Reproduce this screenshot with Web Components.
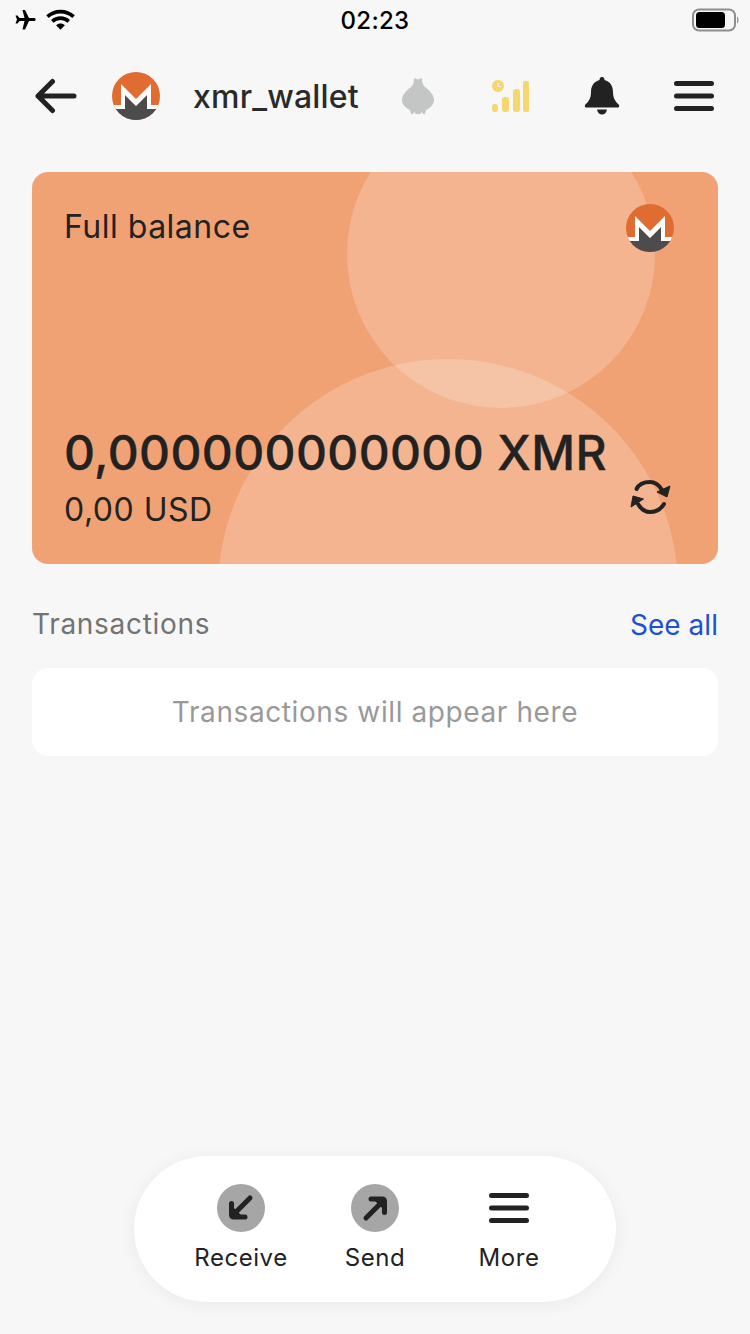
<!DOCTYPE html>
<html lang="en"><head><meta charset="utf-8"><title>xmr_wallet</title>
<style>html,body{margin:0;padding:0;background:#f7f7f7}body{width:750px;height:1334px;overflow:hidden;font-family:Inter,"Liberation Sans",sans-serif;color:#222}</style>
</head><body>
<wallet-app></wallet-app>
<template id="logo"><style>:host{display:block;width:48px;height:48px;flex:none}svg{display:block;width:100%;height:100%}</style>
<svg viewBox="0 0 48 48"><defs><clipPath id="c"><circle cx="24" cy="24" r="24"/></clipPath></defs><g clip-path="url(#c)"><rect width="48" height="48" fill="#e06c32"/><path d="M0 37H13V23L24 34L35 23V37H48V48H0Z" fill="#4c4c4c"/><path d="M0 37V33H9V12L24 27L39 12V33H48V37H35V23L24 34L13 23V37Z" fill="#fff"/></g></svg></template>
<script>
const tpl=(html)=>{const t=document.createElement('template');t.innerHTML=html;return t};
function def(name,html){const t=tpl(html);customElements.define(name,class extends HTMLElement{constructor(){super();this.attachShadow({mode:'open'}).appendChild(t.content.cloneNode(true))}})}
def('xmr-logo',document.getElementById('logo').innerHTML);
const burger='<svg width="40" height="30" viewBox="0 0 40 30"><g stroke="#222" stroke-width="5" stroke-linecap="round"><path d="M2.500 2.500H37.500M2.500 15H37.500M2.500 27.500H37.500"/></g></svg>';
def('status-bar',`<style>:host{display:flex;height:40px;align-items:center;justify-content:space-between;padding:0 11px 0 14px;position:relative;color:#000}
.l{display:flex;gap:10px;align-items:center}.t{position:absolute;left:0;right:0;top:1px;text-align:center;font:500 24px/40px Inter,sans-serif;letter-spacing:.3px}svg{display:block}</style>
<div class="l"><svg width="22" height="20" viewBox="0 0 22 20"><path d="M8.500 0H11L15 8H20.500C22 8 22 11 20.500 11H15L11 19.500H8.500L10.500 11H5.500L3.500 13.500H1.500L3 9.500L1.500 5.500H3.500L5.500 8H10.500Z"/></svg>
<svg width="29" height="22" viewBox="0 0 30 22"><path d="M1.500 7.500C9 .5 21 .5 28.500 7.500" fill="none" stroke="#000" stroke-width="3.800"/><path d="M6.500 12.500C11.500 8 18.500 8 23.500 12.500" fill="none" stroke="#000" stroke-width="3.800"/><path d="M10.500 16.500C13 14 17 14 19.500 16.500L15 21Z"/></svg></div>
<div class="t">02:23</div>
<svg width="47" height="24" viewBox="0 0 47 24"><rect x="1" y="1.500" width="42" height="21" rx="6" fill="none" stroke="#8e8e8e" stroke-width="2"/><rect x="4" y="4" width="29" height="16" rx="3.500"/><path d="M45 8.500C47 9 47 15 45 15.500Z" fill="#9a9a9a"/></svg>`);
def('top-bar',`<style>:host{display:flex;align-items:center;height:96px;padding:8px 36px 8px 35px;box-sizing:border-box;margin-top:8px}
h1{margin:2px 0 0 33px;font:500 32px/48px Inter,sans-serif;color:#2a2a2a;width:208px;white-space:nowrap;letter-spacing:.2px}
svg{display:block;flex:none}.back{margin-right:35px}</style>
<svg class="back" width="42" height="36" viewBox="0 0 42 36"><path d="M39 18H3M17.500 3.500L3 18L17.500 32.500" fill="none" stroke="#222" stroke-width="5" stroke-linecap="round" stroke-linejoin="round"/></svg>
<xmr-logo></xmr-logo><h1>xmr_wallet</h1>
<svg style="margin-right:57px;margin-left:1px;margin-top:-1px" width="34" height="38" viewBox="0 0 34 38"><path d="M13 1L17 2.500L21 1C21 6 22 8 24 10C29 14 33 18 33 23C33 28 29 31 25 33L24 37H22L20.500 34.500L19.500 37H14.500L13.500 34.500L12 37H10L9 33C5 31 1 28 1 23C1 18 5 14 10 10C12 8 13 6 13 1Z" fill="#c4c5c5"/></svg>
<svg style="margin-right:54px;margin-top:-1px" width="38" height="32" viewBox="0 0 38 32"><g fill="#f5d76e"><circle cx="6" cy="6" r="6"/><rect x="0" y="24" width="6" height="8" rx="3"/><rect x="10" y="17" width="7" height="15" rx="3"/><rect x="21" y="9" width="7" height="23" rx="3"/><rect x="31" y="1" width="6" height="31" rx="2"/></g><path d="M6 3V6.500H9" stroke="#f7f7f7" stroke-width="1.200" fill="none"/></svg>
<svg style="margin-right:54px;margin-top:-1px" width="36" height="38" viewBox="0 0 36 38"><path d="M18 0C20 0 20.500 1.500 20.500 3C26 4.500 29 9 29 15C29 21 31 24 35 28C35.500 29.500 35 30.500 34 30.500H2C1 30.500 .5 29.500 1 28C5 24 7 21 7 15C7 9 10 4.500 15.500 3C15.500 1.500 16 0 18 0ZM13 32.500H23C22.500 35.500 20.500 37.500 18 37.500C15.500 37.500 13.500 35.500 13 32.500Z" fill="#222"/></svg>
<span style="display:block;flex:none;height:30px">${burger}</span>`);
def('balance-card',`<style>:host{display:flex;flex-direction:column;position:relative;overflow:hidden;height:392px;margin:0 32px;box-sizing:border-box;padding:32px 33px;background:#f1a274;border-radius:16px;color:#222}
.c{position:absolute;border-radius:50%;background:rgba(255,255,255,.2)}.a{left:315px;top:-72px;width:308px;height:308px}.b{left:186px;top:187px;width:460px;height:460px}
.top,.bot{position:relative;display:flex;justify-content:space-between;align-items:flex-start}.top{margin-right:11px}
.f{font:400 32px/46px Inter,sans-serif;letter-spacing:.5px;margin-left:-1px}.bot{margin-top:auto;display:block}.v{font:500 48px/56px Inter,sans-serif;letter-spacing:.38px;-webkit-text-stroke:.4px #222;white-space:nowrap;margin:0 0 7px -1px}.u{font:400 32px/44px Inter,sans-serif;letter-spacing:.5px;margin-left:-1px}
.r{position:absolute;right:14px;bottom:18px;display:block}</style>
<div class="c a"></div><div class="c b"></div>
<div class="top"><div class="f">Full balance</div><xmr-logo></xmr-logo></div>
<div class="bot"><div class="v">0,000000000000 XMR</div><div class="u">0,00 USD</div>
<svg class="r" width="41" height="34" viewBox="0 0 41 34"><g fill="none" stroke="#222" stroke-width="4" stroke-linecap="round"><path d="M6.500 9C9 4 14 2 20 2C25 2 29 5 32 10"/><path d="M34 24C31 29 26 32 20 32C15 32 11 29 8 24"/></g><path d="M40 6L37 17L27 12Z" fill="#222" stroke="#222" stroke-linejoin="round"/><path d="M1 27L3 16L13.500 19Z" fill="#222" stroke="#222" stroke-linejoin="round"/></svg></div>`);
def('tx-section',`<style>:host{display:block;margin:36px 32px 0}
.h{display:flex;justify-content:space-between;align-items:center;height:48px}.t{font:400 28px/48px Inter,sans-serif;color:#737373;letter-spacing:.7px}.a{font:400 28px/48px Inter,sans-serif;color:#1e50d2;letter-spacing:.05px;margin-top:2px}
.e{margin-top:20px;height:88px;background:#fff;border-radius:16px;text-align:center;font:400 28px/88px Inter,sans-serif;color:#999;letter-spacing:.6px}</style>
<div class="h"><div class="t">Transactions</div><div class="a">See all</div></div><div class="e">Transactions will appear here</div>`);
def('dock-item',`<style>:host{display:flex;flex-direction:column;align-items:center;width:134px;color:#222}
.i{height:48px;display:flex;align-items:center;justify-content:center}.l{margin-top:8px;font:400 24px/36px Inter,sans-serif;letter-spacing:.55px}</style>
<div class="i"><slot name="icon"></slot></div><div class="l"><slot></slot></div>`);
def('action-dock',`<style>:host{display:flex;justify-content:center;align-self:center;margin-top:auto;margin-bottom:32px;width:482px;height:146px;box-sizing:border-box;padding-top:28px;background:#fff;border-radius:73px;box-shadow:0 2px 18px rgba(0,0,0,.06)}
svg{display:block}</style>
<dock-item><svg slot="icon" width="48" height="48" viewBox="0 0 48 48"><circle cx="24" cy="24" r="24" fill="#a6a6a6"/><path d="M33 14L16 31" stroke="#222" stroke-width="5" stroke-linecap="round"/><path d="M14.500 19.500V30.500C14.500 32 15.500 33 17 33H28" fill="none" stroke="#222" stroke-width="5" stroke-linecap="round" stroke-linejoin="round"/><path d="M15 32V22L25 32Z" fill="#222"/></svg>Receive</dock-item>
<dock-item><svg slot="icon" width="48" height="48" viewBox="0 0 48 48"><circle cx="24" cy="24" r="24" fill="#a6a6a6"/><path d="M15 34L32 17" stroke="#222" stroke-width="5" stroke-linecap="round"/><path d="M20 15H31C32.500 15 33.500 16 33.500 17.500V28.500" fill="none" stroke="#222" stroke-width="5" stroke-linecap="round" stroke-linejoin="round"/><path d="M33 16V26L23 16Z" fill="#222"/></svg>Send</dock-item>
<dock-item><span slot="icon" style="display:block;height:30px">${burger}</span>More</dock-item>`);
def('wallet-app',`<style>:host{display:flex;flex-direction:column;height:1334px;background:#f7f7f7}balance-card{margin-top:28px}</style>
<status-bar></status-bar><top-bar></top-bar><balance-card></balance-card><tx-section></tx-section><action-dock></action-dock>`);
</script></body></html>
